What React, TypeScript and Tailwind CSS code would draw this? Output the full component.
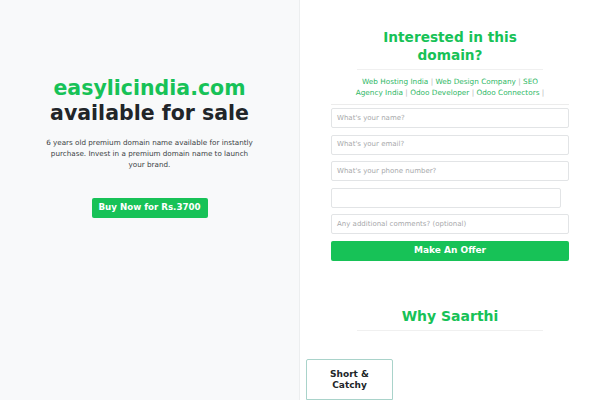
import React from 'react';

const fields = [
    { placeholder: "What's your name?", narrow: false },
    { placeholder: "What's your email?", narrow: false },
    { placeholder: "What's your phone number?", narrow: false },
    { placeholder: '', narrow: true },
    { placeholder: 'Any additional comments? (optional)', narrow: false },
];

const links = ['Web Hosting India', 'Web Design Company', 'SEO Agency India', 'Odoo Developer', 'Odoo Connectors'];

export default function App() {
    return (
        <div className="flex w-[600px] h-[400px] overflow-hidden bg-white" style={{ fontFamily: '"DejaVu Sans", sans-serif' }}>
            <div className="w-[300px] shrink-0 bg-[#f8f9fa] border-r border-[#eceeef] flex flex-col items-center pt-[76px]">
                <h1 className="text-[20.5px] font-bold leading-[25px] text-[#17c257] text-center">easylicindia.com</h1>
                <h2 className="text-[20.5px] font-bold leading-[25px] text-[#212529] text-center">available for sale</h2>
                <p className="mt-[11px] w-[215px] text-[7.2px] leading-[11px] text-[#3a3f44] text-center">
                    6 years old premium domain name available for instantly purchase. Invest in a premium domain name to launch your brand.
                </p>
                <button className="mt-[28px] h-[20px] w-[116px] bg-[#17c257] text-white text-[8.7px] font-bold rounded-[2px]">
                    Buy Now for Rs.3700
                </button>
            </div>

            <div className="flex-1 flex flex-col items-center pt-[28px]">
                <div className="w-[238px] flex flex-col items-center">
                    <h3 className="text-[13.7px] font-bold leading-[18px] text-[#17c257] text-center w-[186px]">Interested in this domain?</h3>
                    <div className="mt-[5px] w-[186px] border-t border-[#f0f0f0]" />
                    <p className="mt-[6px] text-[7.3px] leading-[11px] text-center text-[#2fb866] px-[23px]">
                        {links.map((l) => (
                            <React.Fragment key={l}>
                                <a className="text-[#2fb866]">{l}</a> <span className="text-[#bbbbbb]">|</span>{' '}
                            </React.Fragment>
                        ))}
                    </p>
                    <div className="mt-[6px] w-full border-t border-[#ececec]" />
                    <div className="mt-[3px] w-full flex flex-col gap-[6.5px]">
                        {fields.map((f, i) => (
                            <div
                                key={i}
                                className={`h-[20px] border border-[#e2e4e6] rounded-[2px] flex items-center px-[5px] text-[7px] text-[#a7a9ab] ${f.narrow ? 'w-[230px]' : 'w-full'}`}
                            >
                                {f.placeholder}
                            </div>
                        ))}
                        <button className="h-[20px] w-full bg-[#17c257] text-white text-[9px] font-bold rounded-[2px]">
                            Make An Offer
                        </button>
                    </div>
                </div>

                <h3 className="mt-[46px] text-[14px] font-bold leading-[18px] text-[#17c257]">Why Saarthi</h3>
                <div className="mt-[5px] w-[186px] border-t border-[#f0f0f0]" />

                <div className="self-start ml-[6px] mt-[28px] w-[87px] h-[60px] border border-[#a9d3ca] rounded-t-[2px] pt-[9px] text-center text-[9px] font-bold leading-[11px] text-[#212529]">
                    Short &amp;<br />Catchy
                </div>
            </div>
        </div>
    );
}
